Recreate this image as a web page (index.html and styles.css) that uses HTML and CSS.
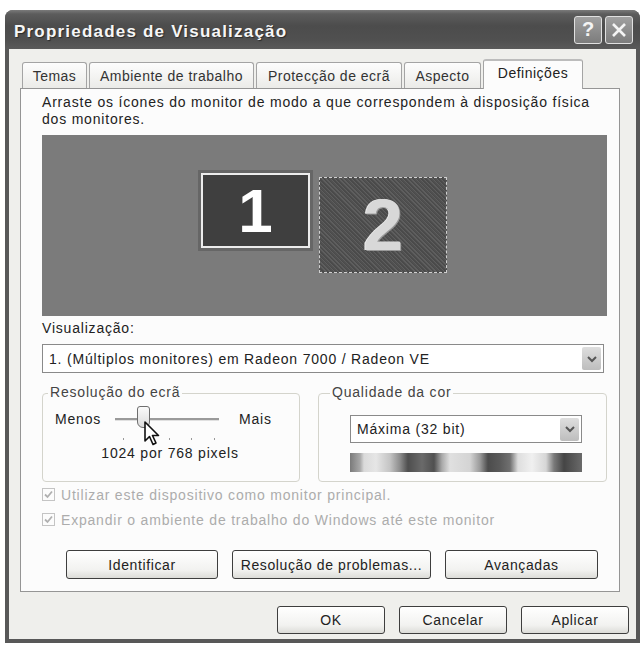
FILE: index.html
```html
<!DOCTYPE html>
<html lang="pt">
<head>
    <meta charset="UTF-8">
    <title>Propriedades de Visualização</title>
    <link rel="stylesheet" href="styles.css">
</head>
<body>
    <div class="window">
        <div class="titlebar">
            <span class="title">Propriedades de Visualização</span>
            <div class="caption-buttons">
                <span class="cap-btn">?</span>
                <span class="cap-btn">
                    <svg width="18" height="18" viewBox="0 0 18 18"><path d="M3 3 L15 15 M15 3 L3 15" stroke="#f4f4f4" stroke-width="2.6"/></svg>
                </span>
            </div>
        </div>
        <div class="client">
            <div class="tabs">
                <div class="tab tab-temas">Temas</div>
                <div class="tab tab-ambiente">Ambiente de trabalho</div>
                <div class="tab tab-proteccao">Protecção de ecrã</div>
                <div class="tab tab-aspecto">Aspecto</div>
                <div class="tab tab-active">Definições</div>
            </div>
            <div class="panel">
                <p class="intro">Arraste os ícones do monitor de modo a que correspondem à disposição física dos monitores.</p>
                <div class="monitor-area">
                    <div class="monitor monitor-one"><span>1</span></div>
                    <div class="monitor monitor-two"><span>2</span></div>
                </div>
                <div class="label">Visualização:</div>
                <div class="select select-wide">
                    <span>1. (Múltiplos monitores) em Radeon 7000 / Radeon VE</span>
                    <span class="select-arrow">
                        <svg width="12" height="10" viewBox="0 0 12 10"><path d="M2 3 L6 7 L10 3" fill="none" stroke="#555" stroke-width="2"/></svg>
                    </span>
                </div>
                <div class="groups">
                    <div class="group group-res">
                        <span class="group-title">Resolução do ecrã</span>
                        <div class="slider-row">
                            <span>Menos</span>
                            <div class="slider">
                                <div class="track"></div>
                                <div class="thumb"></div>
                                <div class="ticks"><i></i><i></i><i></i><i></i><i></i></div>
                                <svg class="cursor" width="18" height="26" viewBox="0 0 18 26">
                                    <path d="M1 1 L1 20 L5.5 15.5 L9 23.5 L12 22 L8.5 14.5 L14.5 14.5 Z" fill="#fff" stroke="#111" stroke-width="1.6" stroke-linejoin="round"/>
                                </svg>
                            </div>
                            <span>Mais</span>
                        </div>
                        <div class="res-caption">1024 por 768 pixels</div>
                    </div>
                    <div class="group group-color">
                        <span class="group-title">Qualidade da cor</span>
                        <div class="select select-color">
                            <span>Máxima (32 bit)</span>
                            <span class="select-arrow">
                                <svg width="12" height="10" viewBox="0 0 12 10"><path d="M2 3 L6 7 L10 3" fill="none" stroke="#555" stroke-width="2"/></svg>
                            </span>
                        </div>
                        <div class="color-bar"></div>
                    </div>
                </div>
                <div class="check-row">
                    <span class="checkbox"><svg width="11" height="11" viewBox="0 0 11 11"><path d="M2 5.5 L4.5 8 L9 2.5" fill="none" stroke="#b0b0b0" stroke-width="1.8"/></svg></span>
                    Utilizar este dispositivo como monitor principal.
                </div>
                <div class="check-row">
                    <span class="checkbox"><svg width="11" height="11" viewBox="0 0 11 11"><path d="M2 5.5 L4.5 8 L9 2.5" fill="none" stroke="#b0b0b0" stroke-width="1.8"/></svg></span>
                    Expandir o ambiente de trabalho do Windows até este monitor
                </div>
                <div class="panel-buttons">
                    <button class="btn btn-identify">Identificar</button>
                    <button class="btn btn-trouble">Resolução de problemas...</button>
                    <button class="btn btn-advanced">Avançadas</button>
                </div>
            </div>
            <div class="dialog-buttons">
                <button class="btn btn-dialog">OK</button>
                <button class="btn btn-dialog">Cancelar</button>
                <button class="btn btn-dialog">Aplicar</button>
            </div>
        </div>
    </div>
</body>
</html>
```

FILE: styles.css
```css
body {
    margin: 0;
    padding: 10px 2px 0 5px;
    background: #fff;
    font-family: "Liberation Sans", Arial, sans-serif;
    font-size: 14px;
    letter-spacing: 0.8px;
    color: #222;
}
.window {
    width: 635px;
    height: 633px;
    background: #585858;
    border-radius: 8px 8px 0 0;
    display: flex;
    flex-direction: column;
}
.titlebar {
    height: 39px;
    flex-shrink: 0;
    display: flex;
    align-items: center;
    justify-content: space-between;
    padding: 0 7px 0 9px;
    border-radius: 8px 8px 0 0;
    background: linear-gradient(#7a7a7a 0px, #5c5c5c 4px, #4c4c4c 16px, #505050 30px, #5a5a5a 39px);
}
.title {
    color: #f6f6f6;
    font-weight: bold;
    font-size: 17px;
    letter-spacing: 1.2px;
    padding-top: 4px;
    text-shadow: 1px 1px 1px #2a2a2a;
}
.caption-buttons {
    display: flex;
    gap: 3px;
}
.cap-btn {
    width: 28px;
    height: 28px;
    box-sizing: border-box;
    border: 1px solid #e0e0e0;
    border-radius: 3px;
    background: linear-gradient(#a0a0a0, #7c7c7c);
    color: #f4f4f4;
    font-weight: bold;
    font-size: 20px;
    letter-spacing: 0;
    display: flex;
    align-items: center;
    justify-content: center;
}
.client {
    flex: 1;
    margin: 0 4px 4px 4px;
    background: #efefec;
    padding: 13px 7px 0 11px;
}
.tabs {
    display: flex;
    align-items: flex-end;
    height: 26px;
    margin-left: 2px;
    gap: 2px;
}
.tab {
    height: 26px;
    box-sizing: border-box;
    border: 1px solid #a4a4a4;
    border-bottom: none;
    border-radius: 3px 3px 0 0;
    background: linear-gradient(#fdfdfd, #ebebe8);
    display: flex;
    align-items: center;
    justify-content: center;
    color: #333;
    white-space: nowrap;
    letter-spacing: 0.5px;
}
.tab-temas { width: 65px; }
.tab-ambiente { width: 165px; }
.tab-proteccao { width: 146px; }
.tab-aspecto { width: 77px; }
.tab-active {
    width: 100px;
    height: 30px;
    margin-bottom: -1px;
    position: relative;
    background: #fcfcfc;
    border-top: 2px solid #bcbcbc;
    padding-bottom: 5px;
    color: #222;
}
.panel {
    width: 600px;
    height: 504px;
    box-sizing: border-box;
    border: 1px solid #959595;
    background: #fcfcfc;
    padding: 5px 12px 0 21px;
}
.intro {
    margin: 0;
    line-height: 17px;
}
.monitor-area {
    position: relative;
    margin-top: 7px;
    height: 181px;
    background: #7b7b7b;
}
.monitor {
    position: absolute;
    box-sizing: border-box;
    display: flex;
    align-items: center;
    justify-content: center;
    color: #fff;
    font-weight: bold;
    letter-spacing: 0;
}
.monitor-one {
    left: 159px;
    top: 38px;
    width: 109px;
    height: 75px;
    background: #3f3f3f;
    border: 2px solid #ececec;
    box-shadow: 0 0 0 3px #666;
    font-size: 62px;
}
.monitor-two {
    left: 277px;
    top: 42px;
    width: 128px;
    height: 96px;
    background: repeating-linear-gradient(45deg, #505050 0 1px, #5e5e5e 1px 2px, #4a4a4a 2px 3px);
    border: 1px dashed #cfcfcf;
    font-size: 72px;
}
.monitor-two span {
    color: #d8d8d8;
    text-shadow: 1px 1px 0 #999, -1px 0 0 #eee;
}
.label {
    margin-top: 4px;
    line-height: 17px;
}
.select {
    box-sizing: border-box;
    border: 1px solid #8a8a8a;
    background: #fff;
    display: flex;
    align-items: center;
    justify-content: space-between;
    padding: 0 2px 0 6px;
    color: #222;
    white-space: nowrap;
}
.select-wide {
    margin-top: 7px;
    width: 562px;
    height: 29px;
}
.select-arrow {
    width: 19px;
    height: 23px;
    border-radius: 2px;
    background: linear-gradient(#dedede, #bdbdbd);
    display: flex;
    align-items: center;
    justify-content: center;
}
.groups {
    display: flex;
    gap: 18px;
    margin-top: 20px;
}
.group {
    height: 89px;
    box-sizing: border-box;
    border: 1px solid #d4d4cc;
    border-radius: 4px;
}
.group-res {
    width: 258px;
}
.group-color {
    flex: 1;
    padding-left: 31px;
}
.group-title {
    display: inline-block;
    margin: -10px 0 0 5px;
    padding: 0 2px;
    background: #fcfcfc;
    color: #444;
    line-height: 17px;
    vertical-align: top;
}
.group-color .group-title {
    margin-left: -20px;
}
.slider-row {
    display: flex;
    align-items: flex-start;
    padding: 1px 0 0 12px;
}
.slider-row span {
    line-height: 16px;
}
.slider {
    position: relative;
    width: 104px;
    height: 32px;
    margin: 0 20px 0 14px;
}
.track {
    margin-top: 7px;
    height: 2px;
    background: #9a9a9a;
    border-bottom: 1px solid #e0e0e0;
}
.thumb {
    position: absolute;
    left: 22px;
    top: -5px;
    width: 13px;
    height: 22px;
    box-sizing: border-box;
    border: 1px solid #6e6e6e;
    border-radius: 3px 3px 6px 6px;
    background: linear-gradient(#fafafa, #dcdcdc);
}
.ticks {
    display: flex;
    justify-content: space-between;
    padding: 0 4px 0 8px;
    margin-top: 17px;
}
.ticks i {
    width: 1px;
    height: 2px;
    background: #999;
}
.cursor {
    position: absolute;
    left: 29px;
    top: 10px;
}
.res-caption {
    text-align: center;
    margin-top: 2px;
    padding-right: 2px;
}
.select-color {
    margin-top: 5px;
    width: 232px;
    height: 28px;
}
.color-bar {
    margin-top: 10px;
    width: 232px;
    height: 19px;
    background: linear-gradient(to right,
        #7a7a7a 0px, #a8a8a8 10px, #dadada 14px, #e6e6e6 26px, #c4c4c4 40px, #8c8c8c 50px,
        #4e4e4e 58px, #6a6a6a 72px, #505050 84px, #aaaaaa 92px, #e0e0e0 100px, #d4d4d4 120px,
        #9a9a9a 130px, #4c4c4c 138px, #5a5a5a 150px, #707070 160px, #dedede 168px, #f0f0f0 182px,
        #d6d6d6 196px, #7a7a7a 204px, #454545 214px, #6a6a6a 232px);
}
.check-row {
    height: 25px;
    display: flex;
    align-items: center;
    gap: 6px;
    color: #acacac;
    white-space: nowrap;
}
.checkbox {
    width: 13px;
    height: 13px;
    box-sizing: border-box;
    border: 1px solid #c4c4c4;
    display: flex;
    align-items: center;
    justify-content: center;
}
.btn {
    height: 29px;
    box-sizing: border-box;
    border: 1px solid #3e3e3e;
    border-radius: 3px;
    background: linear-gradient(#ffffff, #f2f2f0 70%, #dcdcd8);
    font-family: "Liberation Sans", Arial, sans-serif;
    font-size: 14px;
    letter-spacing: 0.6px;
    color: #222;
    padding: 0;
    white-space: nowrap;
}
.panel-buttons {
    display: flex;
    gap: 14px;
    margin: 18px 0 0 24px;
}
.btn-identify { width: 152px; }
.btn-trouble { width: 199px; }
.btn-advanced { width: 153px; }
.dialog-buttons {
    display: flex;
    justify-content: flex-end;
    gap: 14px;
    margin-top: 14px;
}
.btn-dialog {
    width: 108px;
    height: 28px;
}
```
